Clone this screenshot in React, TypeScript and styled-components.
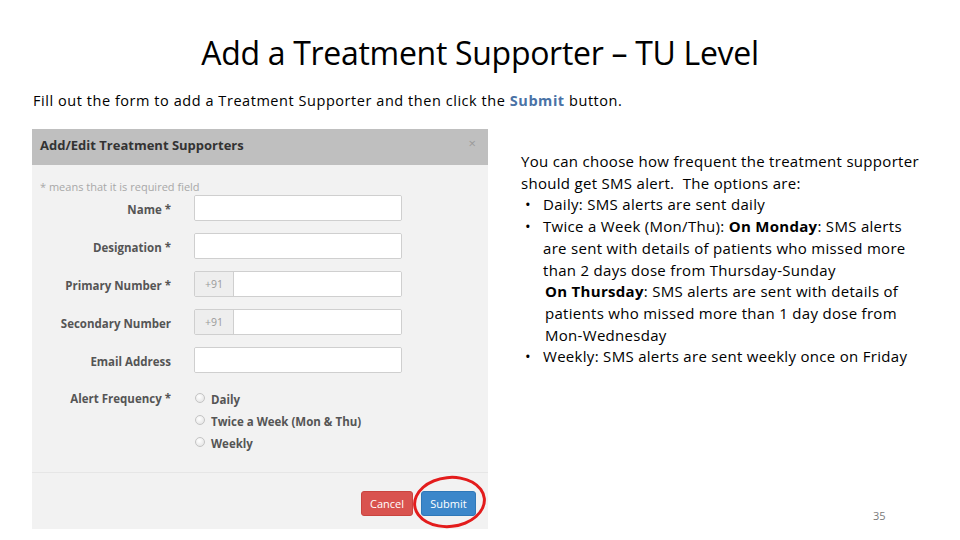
import React from "react";
import styled, { createGlobalStyle } from "styled-components";

const GlobalStyle = createGlobalStyle`
  html, body {
    margin: 0;
    padding: 0;
    background: #ffffff;
  }
  * {
    box-sizing: border-box;
  }
`;

const fields = [
  { label: "Name *" },
  { label: "Designation *" },
  { label: "Primary Number *", prefix: "+91" },
  { label: "Secondary Number", prefix: "+91" },
  { label: "Email Address" },
];

const frequencies = ["Daily", "Twice a Week (Mon & Thu)", "Weekly"];

export default function App() {
  return (
    <>
      <GlobalStyle />
      <Slide>
        <Title>Add a Treatment Supporter – TU Level</Title>
        <Intro>
          Fill out the form to add a Treatment Supporter and then click the{" "}
          <Highlight>Submit</Highlight> button.
        </Intro>

        <Content>
          <Panel>
            <PanelHeader>
              <PanelTitle>Add/Edit Treatment Supporters</PanelTitle>
              <Close>×</Close>
            </PanelHeader>

            <PanelBody>
              <Note>* means that it is required field</Note>
              {fields.map((f) => (
                <FieldRow key={f.label}>
                  <Label>{f.label}</Label>
                  <InputGroup>
                    {f.prefix && <Addon>{f.prefix}</Addon>}
                    <TextInput />
                  </InputGroup>
                </FieldRow>
              ))}

              <RadioRow>
                <Label $top>Alert Frequency *</Label>
                <RadioList>
                  {frequencies.map((f) => (
                    <RadioItem key={f}>
                      <RadioDot />
                      {f}
                    </RadioItem>
                  ))}
                </RadioList>
              </RadioRow>
            </PanelBody>

            <PanelFooter>
              <Button $variant="danger">Cancel</Button>
              <SubmitWrap>
                <Button $variant="primary">Submit</Button>
                <Circle />
              </SubmitWrap>
            </PanelFooter>
          </Panel>

          <Notes>
            <Para>
              You can choose how frequent the treatment supporter
              <br />
              should get SMS alert.&nbsp; The options are:
            </Para>
            <Bullet>
              <Dot>•</Dot>
              <BulletText>Daily: SMS alerts are sent daily</BulletText>
            </Bullet>
            <Bullet>
              <Dot>•</Dot>
              <BulletText>
                Twice a Week (Mon/Thu): <b>On Monday</b>: SMS alerts
                <br />
                are sent with details of patients who missed more
                <br />
                than 2 days dose from Thursday-Sunday
                <SubPara>
                  <b>On Thursday</b>: SMS alerts are sent with details of
                  <br />
                  patients who missed more than 1 day dose from
                  <br />
                  Mon-Wednesday
                </SubPara>
              </BulletText>
            </Bullet>
            <Bullet>
              <Dot>•</Dot>
              <BulletText>Weekly: SMS alerts are sent weekly once on Friday</BulletText>
            </Bullet>
            <PageNumber>35</PageNumber>
          </Notes>
        </Content>
      </Slide>
    </>
  );
}

const Slide = styled.div`
  width: 960px;
  height: 540px;
  overflow: hidden;
  padding: 35px 0 0 32px;
  display: flex;
  flex-direction: column;
  font-family: "Open Sans", "Liberation Sans", sans-serif;
  color: #000;
`;

const Title = styled.h1`
  margin: 0 32px 0 0;
  text-align: center;
  font-weight: 400;
  font-size: 32px;
  line-height: 36px;
  letter-spacing: -0.3px;
`;

const Intro = styled.p`
  margin: 21px 0 0 1px;
  font-size: 14.5px;
  line-height: 18px;
  white-space: nowrap;
  letter-spacing: 0.55px;
`;

const Highlight = styled.b`
  color: #4a72a6;
`;

const Content = styled.div`
  margin-top: 19px;
  display: flex;
  gap: 33px;
`;

const Panel = styled.div`
  width: 456px;
  height: 400px;
  display: flex;
  flex-direction: column;
  background: #f2f2f2;
  font-family: "Open Sans", "Noto Sans", sans-serif;
`;

const PanelHeader = styled.div`
  height: 36px;
  flex: none;
  display: flex;
  align-items: center;
  justify-content: space-between;
  padding: 0 12px 4px 8px;
  background: #bfbfbf;
`;

const PanelTitle = styled.div`
  font-size: 13px;
  font-weight: 700;
  color: #333;
`;

const Close = styled.span`
  font-size: 13px;
  color: #9a9a9a;
  margin-top: -4px;
`;

const PanelBody = styled.div`
  flex: 1;
  padding: 14px 0 0 8px;
`;

const Note = styled.div`
  font-size: 11px;
  line-height: 15px;
  color: #a8a8a8;
  margin-bottom: 1px;
`;

const FieldRow = styled.div`
  display: flex;
  align-items: center;
  gap: 23px;
  height: 26px;
  margin-bottom: 12px;
`;

const Label = styled.div<{ $top?: boolean }>`
  width: 131px;
  text-align: right;
  font-size: 11.5px;
  font-weight: 700;
  color: #555;
  line-height: 22px;
  padding-top: ${(p) => (p.$top ? "0" : "3px")};
  align-self: ${(p) => (p.$top ? "flex-start" : "center")};
`;

const InputGroup = styled.div`
  width: 208px;
  height: 26px;
  display: flex;
  border: 1px solid #cfcfcf;
  border-radius: 2px;
  background: #fff;
  overflow: hidden;
`;

const Addon = styled.div`
  width: 39px;
  flex: none;
  display: flex;
  align-items: center;
  justify-content: center;
  background: #eeeeee;
  border-right: 1px solid #cfcfcf;
  font-size: 10.5px;
  color: #9a9a9a;
`;

const TextInput = styled.div`
  flex: 1;
  background: #fff;
`;

const RadioRow = styled.div`
  display: flex;
  gap: 23px;
  margin-top: 15px;
`;

const RadioList = styled.div`
  display: flex;
  flex-direction: column;
`;

const RadioItem = styled.div`
  display: flex;
  align-items: center;
  gap: 6px;
  height: 22px;
  font-size: 11.5px;
  font-weight: 700;
  color: #555;
`;

const RadioDot = styled.span`
  width: 10px;
  height: 10px;
  margin-left: 1px;
  margin-top: -3px;
  border-radius: 50%;
  border: 1px solid #c4c4c4;
  background: radial-gradient(circle at 40% 35%, #ffffff 0%, #e6e6e6 80%);
`;

const PanelFooter = styled.div`
  height: 57px;
  flex: none;
  display: flex;
  justify-content: flex-end;
  align-items: flex-start;
  gap: 8px;
  padding: 18px 12px 0 0;
  border-top: 1px solid #e6e6e6;
`;

const Button = styled.div<{ $variant: "danger" | "primary" }>`
  height: 25px;
  padding: 0 8px;
  display: flex;
  align-items: center;
  border-radius: 3px;
  font-size: 11px;
  color: #fff;
  background: ${(p) => (p.$variant === "danger" ? "#d9534f" : "#3c87ca")};
  border: 1px solid ${(p) => (p.$variant === "danger" ? "#c9443f" : "#2f78b8")};
`;

const SubmitWrap = styled.div`
  position: relative;
  width: 55px;
  display: flex;

  & > ${Button} {
    flex: 1;
    justify-content: center;
  }
`;

const Circle = styled.span`
  position: absolute;
  left: -8px;
  right: -10px;
  top: -15px;
  bottom: -12px;
  border: 3px solid #e31c1c;
  border-radius: 50%;
  transform: rotate(-6deg);
  pointer-events: none;
`;

const Notes = styled.div`
  flex: 1;
  height: 400px;
  display: flex;
  flex-direction: column;
  padding-top: 22px;
  font-family: "Open Sans", "Liberation Sans", sans-serif;
  font-size: 15px;
  line-height: 21.7px;
  white-space: nowrap;
  letter-spacing: 0.3px;
`;

const Para = styled.div``;

const Bullet = styled.div`
  display: flex;
`;

const Dot = styled.span`
  width: 22px;
  flex: none;
  padding-left: 4px;
`;

const BulletText = styled.div``;

const SubPara = styled.div`
  padding-left: 2px;
`;

const PageNumber = styled.div`
  margin-top: auto;
  margin-bottom: 6px;
  padding-left: 352px;
  font-size: 11px;
  line-height: 14px;
  color: #7a7a7a;
  letter-spacing: 0;
`;
